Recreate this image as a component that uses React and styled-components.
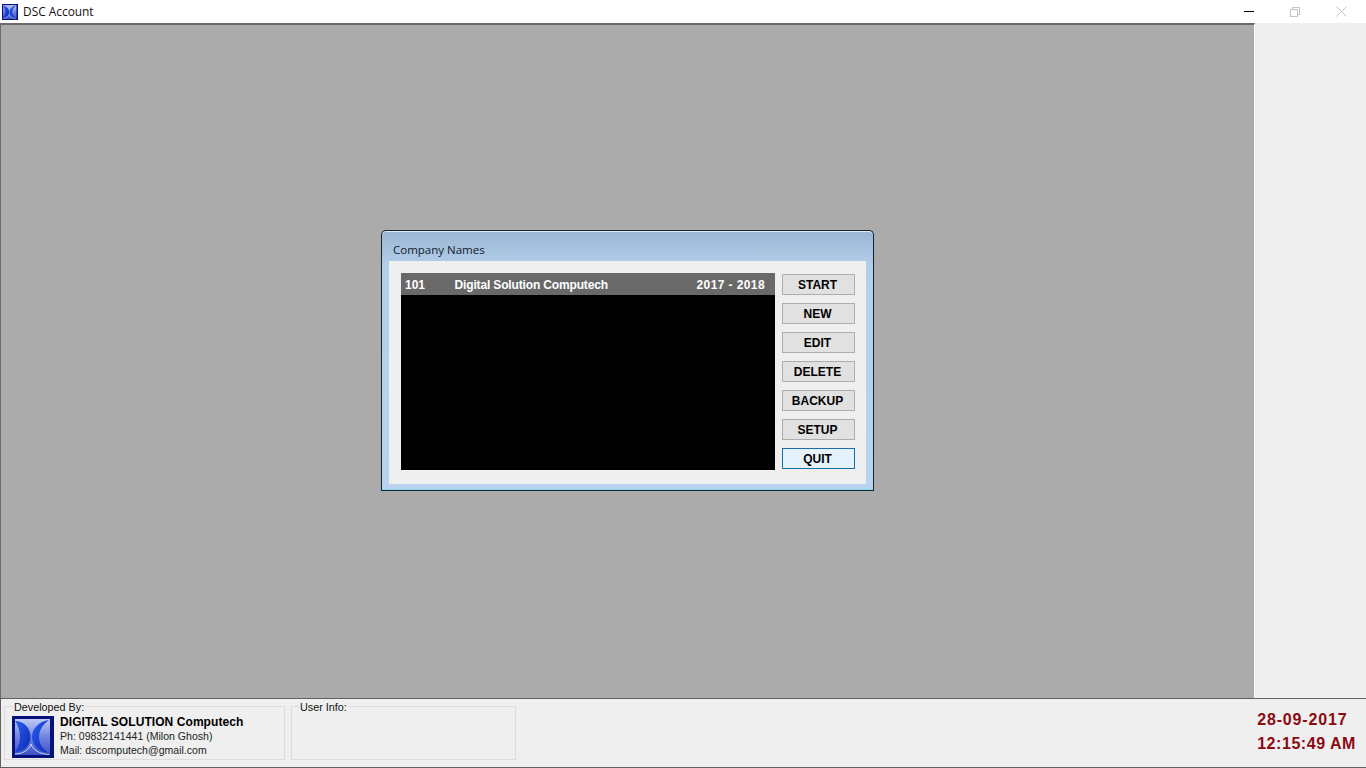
import React from "react";
import styled, { createGlobalStyle } from "styled-components";

const Global = createGlobalStyle`
  html, body { margin: 0; padding: 0; height: 100%; overflow: hidden; background: #efefef; }
  * { box-sizing: border-box; }
`;

const Window = styled.div`
  width: 1366px;
  height: 768px;
  display: flex;
  flex-direction: column;
  background: #efefef;
  font-family: "Liberation Sans", Arial, sans-serif;
`;

const TitleBar = styled.header`
  height: 23px;
  flex: none;
  display: flex;
  align-items: center;
  background: #fff;
  padding-left: 2px;
`;

const TitleText = styled.span`
  margin-left: 5px;
  padding-bottom: 1px;
  font: 11.9px "Open Sans", sans-serif;
  color: #111;
`;

const WindowControls = styled.div`
  margin-left: auto;
  display: flex;
  align-items: center;
`;

const ControlSlot = styled.span`
  width: 46px;
  height: 20px;
  display: flex;
  align-items: center;
  justify-content: center;
  margin-right: ${(p) => p.$mr || 0}px;
`;

const Workspace = styled.div`
  flex: 1;
  min-height: 0;
  display: flex;
`;

const MdiArea = styled.main`
  width: 1255px;
  flex: none;
  background: #ababab;
  border-top: 2px solid #6a6a6a;
  border-left: 1px solid #6a6a6a;
  border-right: 1px solid #fff;
  display: flex;
  justify-content: center;
  padding-top: 205px;
`;

const Dialog = styled.section`
  width: 493px;
  height: 261px;
  flex: none;
  display: flex;
  flex-direction: column;
  border: 1px solid #15232f;
  border-bottom-color: #0d2a3a;
  border-radius: 5px 5px 0 0;
  padding: 0 7px 6px;
  background: linear-gradient(180deg, #99b5d3 0%, #b3cfea 14%, #b9d4ee 100%);
  box-shadow: inset 0 -1px 0 #8fd3ec, inset 0 1px 0 #dfe9f3;
`;

const DialogTitle = styled.h2`
  height: 30px;
  flex: none;
  margin: 0;
  padding: 10px 0 0 4px;
  font: 400 11.5px/18px "Open Sans", sans-serif;
  color: #15202c;
`;

const DialogBody = styled.div`
  flex: 1;
  display: flex;
  gap: 7px;
  padding: 12px 11px 14px 12px;
  background: #efefef;
`;

const CompanyList = styled.div`
  width: 374px;
  height: 197px;
  background: #000;
`;

const CompanyRow = styled.div`
  height: 22px;
  display: grid;
  grid-template-columns: 49.5px 1fr auto;
  align-items: center;
  padding: 1px 10px 0 4px;
  background: #696969;
  color: #fff;
  font-size: 12px;
  font-weight: 700;
`;

const CompanyName = styled.span`
  letter-spacing: -0.15px;
`;

const CompanyYears = styled.span`
  letter-spacing: 0.4px;
`;

const ButtonColumn = styled.div`
  display: flex;
  flex-direction: column;
  gap: 8px;
  padding-top: 1px;
`;

const ActionButton = styled.button`
  width: 73px;
  height: 21px;
  padding: 0 2px 0 0;
  border: 1px solid ${(p) => (p.$focused ? "#1c6ea8" : "#adadad")};
  background: ${(p) => (p.$focused ? "#e5f1fb" : "#e1e1e1")};
  color: #000;
  font: 700 12px "Liberation Sans", Arial, sans-serif;
`;

const SidePanel = styled.aside`
  flex: 1;
  background: #efefef;
`;

const Footer = styled.footer`
  height: 70px;
  flex: none;
  display: flex;
  align-items: flex-start;
  gap: 6px;
  padding: 7px 10px 0 3px;
  background: #efefef;
  border-top: 1px solid #5f5f5f;
  border-bottom: 1px solid #5f5f5f;
  border-left: 1px solid #5f5f5f;
`;

const GroupBox = styled.div`
  position: relative;
  width: ${(p) => p.$width}px;
  height: 54px;
  border: 1px solid #dcdcdc;
  display: flex;
  align-items: flex-start;
  padding: 9px 0 0 7px;
`;

const GroupLabel = styled.span`
  position: absolute;
  top: -7px;
  left: ${(p) => p.$left}px;
  padding: 0 1px;
  background: #efefef;
  font-size: 10.8px;
  line-height: 14px;
  color: #111;
`;

const DevInfo = styled.div`
  margin-left: 6px;
  margin-top: -1px;
  font-size: 10.55px;
  line-height: 14px;
  color: #222;
`;

const DevName = styled.div`
  font-size: 12px;
  font-weight: 700;
  letter-spacing: 0.07px;
  color: #000;
`;

const Clock = styled.div`
  margin-left: auto;
  padding-top: 2px;
  color: #8b0a12;
  font-size: 16px;
  font-weight: 700;
  line-height: 24px;
  letter-spacing: 0.55px;
`;

const ClockDate = styled.div`
  letter-spacing: 0.85px;
`;

const Logo = ({ size }) => (
  <svg width={size} height={size} viewBox="0 0 42 42" style={{ display: "block", flex: "none" }}>
    <defs>
      <linearGradient id={`bg${size}`} x1="0" y1="0" x2="0" y2="1">
        <stop offset="0" stopColor="#c2c9f4" />
        <stop offset="0.5" stopColor="#6f84e0" />
        <stop offset="1" stopColor="#3a52c8" />
      </linearGradient>
      <linearGradient id={`lg${size}`} x1="0" y1="0" x2="1" y2="1">
        <stop offset="0" stopColor="#2a5cf0" />
        <stop offset="1" stopColor="#0c2cb4" />
      </linearGradient>
    </defs>
    <rect width="42" height="42" fill="#06127a" />
    <rect x="3" y="3" width="35" height="36" fill={`url(#bg${size})`} />
    <path d="M3 5 C12 5 18.5 12 18.5 21 C18.5 29 12 36 3 36 C6 32 8 27 8 21 C8 15 6 9 3 5 Z" fill={`url(#lg${size})`} />
    <path d="M37 4 C27 5 20 13 20 21 C20 29 27 36 37 37 C30 33 27 27 27 21 C27 15 30 9 37 4 Z" fill={`url(#lg${size})`} />
    <path d="M3 38 C11 38 17 34 19 28 C21 34 27 38 37 38.5" stroke="#eef1ff" strokeWidth="0.8" fill="none" />
  </svg>
);

const buttons = ["START", "NEW", "EDIT", "DELETE", "BACKUP", "SETUP", "QUIT"];

export default function App() {
  return (
    <Window>
      <Global />
      <TitleBar>
        <Logo size={16} />
        <TitleText>DSC Account</TitleText>
        <WindowControls>
          <ControlSlot>
            <svg width="10" height="10" viewBox="0 0 10 10"><path d="M0 4.5H10" stroke="#000" /></svg>
          </ControlSlot>
          <ControlSlot>
            <svg width="10" height="10" viewBox="0 0 10 10" fill="none" stroke="#c4c4c4"><rect x="0.5" y="2.5" width="7" height="7" /><path d="M2.5 2.5V0.5H9.5V7.5H7.5" /></svg>
          </ControlSlot>
          <ControlSlot $mr={2}>
            <svg width="11" height="11" viewBox="0 0 11 11" stroke="#c4c4c4"><path d="M0.5 0.5L10.5 10.5M10.5 0.5L0.5 10.5" /></svg>
          </ControlSlot>
        </WindowControls>
      </TitleBar>
      <Workspace>
        <MdiArea>
          <Dialog>
            <DialogTitle>Company Names</DialogTitle>
            <DialogBody>
              <CompanyList>
                <CompanyRow>
                  <span>101</span>
                  <CompanyName>Digital Solution Computech</CompanyName>
                  <CompanyYears>2017 - 2018</CompanyYears>
                </CompanyRow>
              </CompanyList>
              <ButtonColumn>
                {buttons.map((b) => (
                  <ActionButton key={b} $focused={b === "QUIT"}>{b}</ActionButton>
                ))}
              </ButtonColumn>
            </DialogBody>
          </Dialog>
        </MdiArea>
        <SidePanel />
      </Workspace>
      <Footer>
        <GroupBox $width={281}>
          <GroupLabel $left={8}>Developed By:</GroupLabel>
          <Logo size={42} />
          <DevInfo>
            <DevName>DIGITAL SOLUTION Computech</DevName>
            <div>Ph: 09832141441 (Milon Ghosh)</div>
            <div>Mail: dscomputech@gmail.com</div>
          </DevInfo>
        </GroupBox>
        <GroupBox $width={225}>
          <GroupLabel $left={7}>User Info:</GroupLabel>
        </GroupBox>
        <Clock>
          <ClockDate>28-09-2017</ClockDate>
          <div>12:15:49 AM</div>
        </Clock>
      </Footer>
    </Window>
  );
}
